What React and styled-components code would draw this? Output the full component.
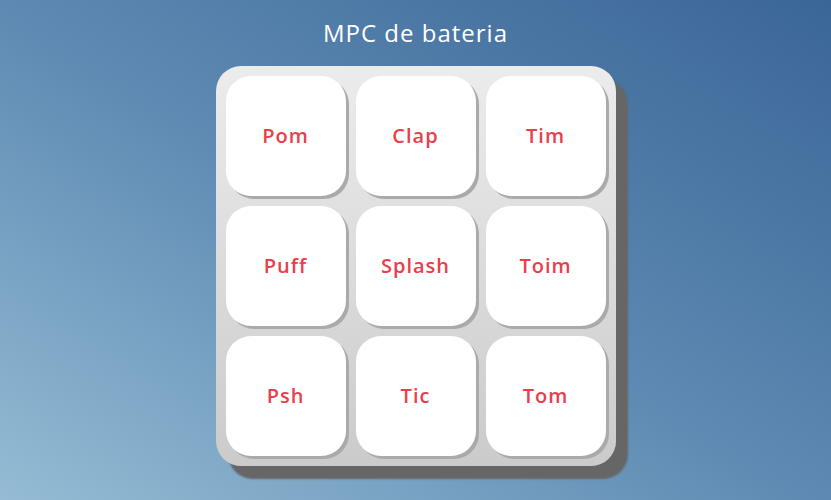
import styled, { createGlobalStyle } from "styled-components";

const GlobalStyle = createGlobalStyle`
  html, body {
    margin: 0;
    padding: 0;
  }
  body {
    min-height: 100vh;
    background: linear-gradient(to top right, #95bcd4 0%, #5d89b2 50%, #3a6597 100%);
    font-family: "Open Sans", "Liberation Sans", sans-serif;
  }
`;

const pads = ["Pom", "Clap", "Tim", "Puff", "Splash", "Toim", "Psh", "Tic", "Tom"];

const App = () => {
  return (
    <>
      <GlobalStyle />
      <StPage>
        <StTitle>MPC de bateria</StTitle>
        <StBoard>
          {pads.map((name) => (
            <StPad key={name}>{name}</StPad>
          ))}
        </StBoard>
      </StPage>
    </>
  );
};

export default App;

const StPage = styled.div`
  width: 100%;
  height: 500px;
  display: flex;
  flex-direction: column;
  align-items: center;
  padding-top: 18px;
  box-sizing: border-box;
  gap: 18px;
`;

const StTitle = styled.h1`
  margin: 0;
  font-size: 24px;
  line-height: 30px;
  font-weight: 400;
  color: #ffffff;
  letter-spacing: 1px;
`;

const StBoard = styled.div`
  width: 400px;
  height: 400px;
  box-sizing: border-box;
  padding: 10px;
  display: grid;
  grid-template-columns: repeat(3, 120px);
  grid-template-rows: repeat(3, 120px);
  gap: 10px;
  border-radius: 25px;
  background: linear-gradient(to bottom, #ececec, #cbcbcb);
  box-shadow: 12px 13px 2px #666666;
`;

const StPad = styled.button`
  border: none;
  border-radius: 25px;
  background: #ffffff;
  box-shadow: 3px 3px 0 #aaaaaa;
  display: flex;
  align-items: center;
  justify-content: center;
  font-family: "Open Sans", "Liberation Sans", sans-serif;
  font-size: 20px;
  font-weight: 600;
  letter-spacing: 1px;
  color: #e8404b;
  cursor: pointer;
  padding: 0 0 2px;
`;
